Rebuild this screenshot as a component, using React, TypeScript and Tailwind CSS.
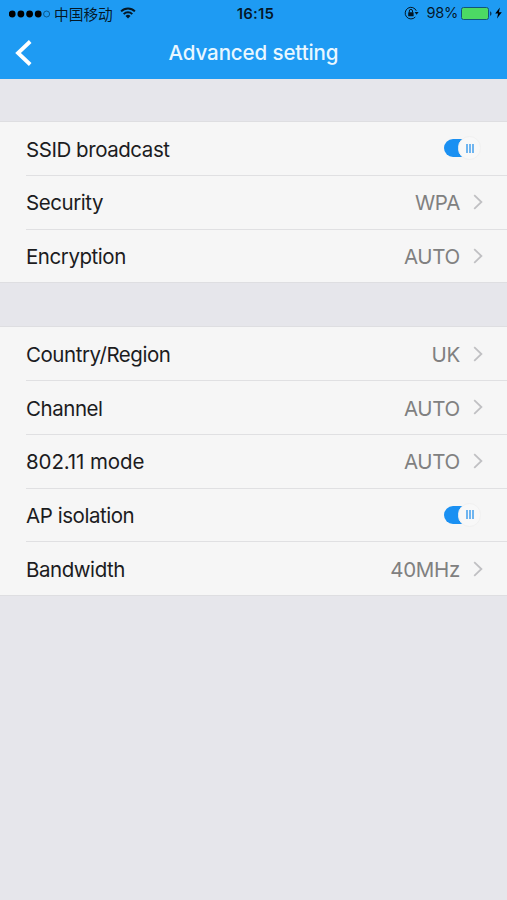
import { useState } from "react";

type Row = {
  label: string;
  value?: string;
  toggle?: boolean;
};

const GROUPS: Row[][] = [
  [
    { label: "SSID broadcast", toggle: true },
    { label: "Security", value: "WPA" },
    { label: "Encryption", value: "AUTO" },
  ],
  [
    { label: "Country/Region", value: "UK" },
    { label: "Channel", value: "AUTO" },
    { label: "802.11 mode", value: "AUTO" },
    { label: "AP isolation", toggle: true },
    { label: "Bandwidth", value: "40MHz" },
  ],
];

function StatusBar() {
  return (
    <div className="grid h-[28px] grid-cols-[1fr_auto_1fr] items-center pl-[9px] pr-[5px] text-black/85">
      <div className="flex items-center">
        <svg width="42" height="10" viewBox="0 0 42 10" className="-mt-px text-black">
          {[3.2, 11.9, 20.6, 29.2].map((cx) => (
            <circle key={cx} cx={cx} cy="5" r="3.4" fill="currentColor" />
          ))}
          <circle cx="37.6" cy="5" r="3" fill="none" stroke="#07456f" strokeWidth="0.8" />
        </svg>
        <span className="ml-[3px] font-['Noto_Sans_CJK_SC',sans-serif] text-[14.7px] leading-5">
          中国移动
        </span>
        <svg width="16" height="12" viewBox="0 0 16 12" className="ml-[7px] -mt-[2px]">
          <g fill="none" stroke="currentColor" strokeWidth="2">
            <path d="M1.1 4.4a9.8 9.8 0 0 1 13.8 0" />
            <path d="M3.7 7.1a6.1 6.1 0 0 1 8.6 0" />
          </g>
          <path d="M8 11.5 5.5 9a3.5 3.5 0 0 1 5 0z" fill="currentColor" />
        </svg>
      </div>
      <span className="text-[15px] font-semibold tracking-[0.2px]">16:15</span>
      <div className="flex items-center justify-end">
        <svg width="15" height="14" viewBox="0 0 15 14" className="-mt-px">
          <path d="M12.3 4.8A5.8 5.8 0 1 0 11.3 11" fill="none" stroke="currentColor" strokeWidth="1" />
          <path d="M10.6 6h4l-2 2.7z" fill="currentColor" />
          <rect x="4.2" y="6.2" width="5.4" height="4" rx="0.5" fill="currentColor" />
          <path d="M5.3 6.4V5a1.6 1.6 0 0 1 3.2 0v1.4" fill="none" stroke="currentColor" strokeWidth="1" />
        </svg>
        <span className="ml-[7px] text-[14.6px] tracking-[-0.3px]">98%</span>
        <svg width="31" height="13" viewBox="0 0 31 13" className="ml-[3px] -mt-px">
          <rect x="0.5" y="0.5" width="27" height="12" rx="2" fill="#4cd964" stroke="#12557a" />
          <path d="M29 4.2c2 .8 2 3.8 0 4.6z" fill="#083b60" />
        </svg>
        <svg width="7" height="12" viewBox="0 0 7 12" className="ml-[3px] -mt-px text-black">
          <path d="M4.9.4.2 6.5h2.9L2 11.6l4.8-6.3H3.9z" fill="currentColor" />
        </svg>
      </div>
    </div>
  );
}

function Toggle() {
  const [on, setOn] = useState(true);

  return (
    <button
      role="switch"
      aria-checked={on}
      onClick={() => setOn(!on)}
      className={`mr-[26px] -mt-[3px] flex h-[18px] w-[37px] items-center rounded-full ${
        on ? "justify-end bg-linear-to-r from-[#1a90f2] from-60% to-transparent to-60%" : "justify-start bg-gray-300"
      }`}
    >
      <span className="flex h-6 w-[23px] shrink-0 items-center justify-center gap-px rounded-full border border-[#f1f1f1] bg-[#f8f8f8]">
        <i className="h-[9px] w-[2px] bg-[#6fb5f0]" />
        <i className="h-[9px] w-[2px] bg-[#6fb5f0]" />
        <i className="h-[9px] w-[2px] bg-[#6fb5f0]" />
      </span>
    </button>
  );
}

function SettingRow({ row, last }: { row: Row; last: boolean }) {
  return (
    <div className="pl-[26px]">
      <div
        className={`flex items-center justify-between pt-[3px] ${
          last ? "h-[52.75px]" : "h-[53.75px] border-b border-[#e0e0e2]"
        }`}
      >
        <span
          className={`text-[20.5px] text-[#1c1c1e] ${
            /^\d/.test(row.label) ? "tracking-[-0.1px]" : "tracking-[-0.45px]"
          }`}
        >
          {row.label}
        </span>
        {row.toggle ? (
          <Toggle />
        ) : (
          <div className="flex items-center pr-[24px]">
            <span className="text-[20.5px] tracking-[-0.3px] text-[#808080]">{row.value}</span>
            <svg width="10" height="16" viewBox="0 0 10 16" className="ml-[13px] -mt-[3px]">
              <path d="M1.2 1.2 8.4 8l-7.2 6.8" fill="none" stroke="#c0c0c3" strokeWidth="1.8" />
            </svg>
          </div>
        )}
      </div>
    </div>
  );
}

export default function App() {
  return (
    <div className="min-h-screen bg-[#e6e6eb] font-['Inter',sans-serif]">
      <header className="h-[79px] bg-[#1e9bf3]">
        <StatusBar />
        <div className="grid h-[50px] grid-cols-[60px_1fr_60px] items-center">
          <button className="pl-[15px]" aria-label="Back">
            <svg width="18" height="26" viewBox="0 0 18 26">
              <path d="M15.2 1.5 3 13l12.2 11.5" fill="none" stroke="white" strokeWidth="3.8" />
            </svg>
          </button>
          <h1 className="pt-px text-center text-[20.5px] font-medium tracking-[-0.1px] text-[#e9f7ff]">
            Advanced setting
          </h1>
        </div>
      </header>

      <main className="flex flex-col gap-[45px] pt-[43px]">
        {GROUPS.map((rows, i) => (
          <section key={i} className="bg-[#f6f6f6] shadow-[0_0_0_1px_#dedee1]">
            {rows.map((row, j) => (
              <SettingRow key={row.label} row={row} last={j === rows.length - 1} />
            ))}
          </section>
        ))}
      </main>
    </div>
  );
}
